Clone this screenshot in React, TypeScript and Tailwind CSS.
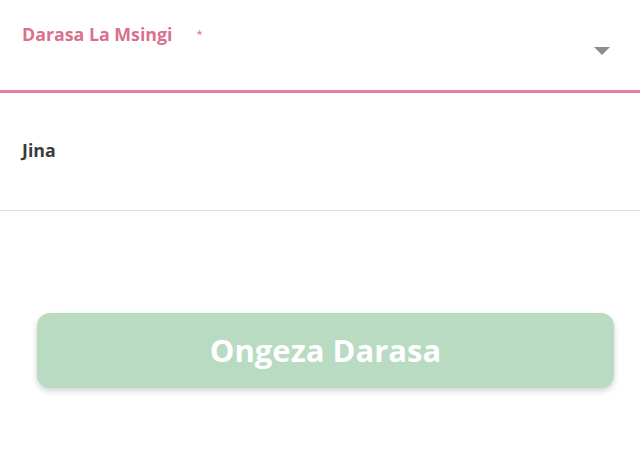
export default function App() {
  return (
    <div className="h-[452px] w-[640px] bg-white font-['Open_Sans',sans-serif]">
      {/* select field */}
      <div className="relative h-[93px] border-b-[3px] border-[#e0829a]">
        <div className="flex items-start pl-[22px] pt-[22px]">
          <span className="text-[17.8px] font-bold leading-[24px] text-[#d9718d]">Darasa La Msingi</span>
          <span className="ml-[24px] mt-[6px] text-[11px] leading-none text-[#d9718d]">*</span>
        </div>
        <div className="absolute right-[30px] top-[47px] h-0 w-0 border-x-[8px] border-t-[8px] border-x-transparent border-t-[#8c8c8c]" />
      </div>

      {/* text field */}
      <div className="h-[118px] border-b border-[#e0e0e0] pl-[22px] pt-[45px]">
        <span className="text-[17.8px] font-bold leading-[24px] text-[#3a3a3a]">Jina</span>
      </div>

      <div className="px-[37px] pt-[102px]">
        <button className="flex h-[75px] w-[577px] items-center justify-center rounded-[13px] bg-[#b8dbc2] text-[31px] font-bold text-white shadow-[0_3px_6px_rgba(0,0,0,0.18)]">
          Ongeza Darasa
        </button>
      </div>
    </div>
  );
}
